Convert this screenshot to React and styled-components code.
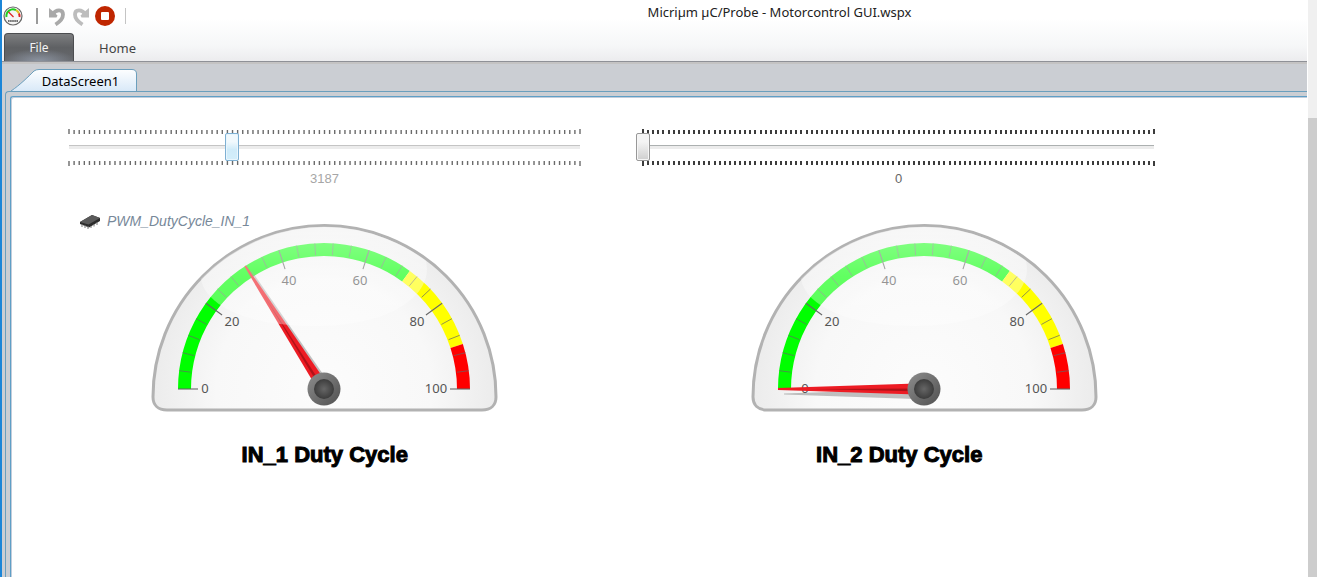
import React, { useState } from "react";
import styled, { createGlobalStyle, css } from "styled-components";

const Global = createGlobalStyle`
  *, *::before, *::after { box-sizing: border-box; }
  body { margin: 0; background: #fff; font-family: "Noto Sans", "Open Sans", sans-serif; }
`;

const Screen = styled.div`
  display: flex;
  min-height: 100vh;
`;

const Window = styled.div`
  flex: 1;
  min-width: 0;
  display: flex;
  flex-direction: column;
  border-left: 2px solid #1c86d8;
  background: #cbced3;
`;

const Scrollbar = styled.div`
  width: 10px;
  padding-top: 118px;
  background: #f0f0f0;
  border-left: 1px solid #fff;
  display: flex;
`;

const ScrollThumb = styled.div`
  flex: 1;
  background: #cdcdcd;
`;

const Ribbon = styled.header`
  background: linear-gradient(#fff 30%, #f6f7f8 75%, #ececee);
  border-bottom: 1px solid #8f9197;
`;

const TitleBar = styled.div`
  display: flex;
  height: 33px;
`;

const QuickAccess = styled.div`
  display: flex;
  align-items: center;
  width: 250px;
  padding: 0 0 2px 1px;
`;

const AppMark = styled.span`
  display: flex;
  width: 20px;
  margin-right: 13px;
`;

const Separator = styled.span`
  width: ${(p) => (p.$strong ? 2 : 1)}px;
  height: 16px;
  margin: 0 7px;
  margin-left: ${(p) => (p.$strong ? 0 : 8)}px;
  background: ${(p) => (p.$strong ? "#9a9a9a" : "#c4c4c4")};
`;

const ToolButton = styled.button`
  display: flex;
  justify-content: center;
  align-items: center;
  width: 24px;
  height: 24px;
  padding: 0;
  border: 0;
  background: none;
`;

const WindowTitle = styled.h1`
  flex: 1;
  margin: 0;
  padding-top: 2px;
  text-align: center;
  font: 400 13px/20px "Noto Sans", sans-serif;
  color: #222;
  white-space: nowrap;
`;

const RibbonTabs = styled.nav`
  display: flex;
  padding-left: 2px;
  height: 28px;
`;

const RibbonTab = styled.button`
  padding: 2px 0 0;
  border: 0;
  background: none;
  font: 400 13px/26px "Noto Sans", sans-serif;
  color: #444;
  width: 87px;
  ${(p) =>
    p.$file &&
    css`
      width: 70px;
      padding: 0;
      font-size: 12px;
      color: #f4f4f4;
      border: 1px solid #4c4d50;
      border-bottom: 0;
      border-radius: 4px 4px 0 0;
      background: radial-gradient(ellipse 36px 12px at 50% 100%, #8b93a0, transparent),
        linear-gradient(#7d7e80, #5f6164 50%, #66686c);
    `}
`;

const Workspace = styled.main`
  flex: 1;
  display: flex;
  flex-direction: column;
  border-top: 2px solid #c4c3c3;
  padding-top: 5px;
`;

const DocTabs = styled.div`
  display: flex;
  padding-left: 8px;
  height: 22px;
`;

const DocTab = styled.button`
  position: relative;
  width: 127px;
  padding: 2px 0 0 14px;
  border: 0;
  background: none;
  font: 400 13px/20px "Noto Sans", sans-serif;
  color: #000;
`;

const DocTabShape = styled.svg`
  position: absolute;
  inset: 0;
`;

const DocTabText = styled.span`
  position: relative;
`;

const Frame = styled.div`
  flex: 1;
  display: flex;
  margin-left: 3px;
  padding: 4px 0 0 4px;
  border: 1px solid #6b9fbd;
  border-width: 1px 0 0 1px;
  border-radius: 4px 0 0 0;
`;

const Panel = styled.section`
  flex: 1;
  min-width: 0;
  background: #fff;
  border: 1px solid #5f9fc6;
  border-width: 1px 0 0 1px;
  border-radius: 3px 0 0 0;
  box-shadow: inset 1px 1px 0 #c3cddb;
  padding-top: 31px;
`;

const SliderRow = styled.div`
  display: grid;
  grid-template-columns: 1fr 1fr;
  gap: 63px;
  padding: 0 153px 0 58px;
`;

const SliderBox = styled.label`
  display: flex;
  flex-direction: column;
  min-width: 0;
`;

const Ticks = styled.svg`
  display: block;
  width: 100%;
  height: 6px;
`;

const Range = styled.input`
  appearance: none;
  display: block;
  width: calc(100% + 14px);
  height: 28px;
  margin: -1px -7px;
  background: linear-gradient(${(p) => (p.$soft ? "#c4c4c4" : "#acb0b0")}, ${(p) =>
  p.$soft ? "#c4c4c4" : "#acb0b0"}) 7px 12px / calc(100% - 14px) 1px no-repeat,
    linear-gradient(#ececec, #ececec) 7px 13px / calc(100% - 14px) 3px no-repeat;
  &::-webkit-slider-thumb {
    appearance: none;
    width: 14px;
    height: 28px;
    border: 1px solid ${(p) => (p.$soft ? "#7eb0d3" : "#989898")};
    border-radius: 2px;
    box-shadow: inset 0 0 0 1px ${(p) => (p.$soft ? "#e9f6fd" : "#f6f6f6")};
    background: ${(p) =>
      p.$soft
        ? "linear-gradient(#f1f9fd 30%, #cfebf9 60%, #d3eefb)"
        : "linear-gradient(#f4f4f4 30%, #cfcfcf)"};
  }
`;

const Value = styled.output`
  padding-top: 4px;
  text-align: center;
  font: 400 13px/18px "Liberation Sans", Arial, sans-serif;
  color: ${(p) => (p.$soft ? "#a6a6a6" : "#666")};
`;

const GaugeRow = styled.div`
  position: relative;
  display: flex;
  gap: 252px;
  padding: 35px 0 0 139px;
`;

const Signal = styled.div`
  position: absolute;
  left: 69px;
  top: 24px;
  display: flex;
  align-items: center;
  gap: 6px;
  font: italic 400 14px/18px "Liberation Sans", Arial, sans-serif;
  color: #778899;
`;

const Dial = styled.svg`
  display: block;
  flex: none;
`;

const DialText = styled.text`
  font: 400 13px "Noto Sans", sans-serif;
  fill: #555;
`;

const CaptionRow = styled.div`
  display: grid;
  grid-template-columns: 1fr 1fr;
  gap: 63px;
  padding: 28px 152px 0 58px;
`;

const Caption = styled.h2`
  margin: 0;
  text-align: center;
  font: 700 22px/28px "Liberation Sans", Arial, sans-serif;
  -webkit-text-stroke: 1px #000;
  color: #000;
`;

const CX = 174;
const CY = 166;

function at(value, r) {
  const a = Math.PI * (1 - value / 100);
  return [CX + r * Math.cos(a), CY - r * Math.sin(a)];
}

function band(from, to) {
  const [x1, y1] = at(from, 146);
  const [x2, y2] = at(to, 146);
  const [x3, y3] = at(to, 133);
  const [x4, y4] = at(from, 133);
  return `M${x1} ${y1}A146 146 0 0 1 ${x2} ${y2}L${x3} ${y3}A133 133 0 0 0 ${x4} ${y4}Z`;
}

const BODY = "M3 174A171.500 171.500 0 0 1 346 174C346 182 341 187 332 187H17C8 187 3 182 3 174Z";

const LABELS = [
  [0, 55, 170],
  [20, 82, 103],
  [40, 139, 62],
  [60, 210, 62],
  [80, 267, 103],
  [100, 286, 170],
];

function Gauge({ id, value, label }) {
  const minor = Array.from({ length: 26 }, (_, i) => i * 4);
  const turn = `rotate(${value * 1.8} ${CX} ${CY})`;
  return (
    <Dial width="348" height="190" viewBox="0 0 348 190" role="img" aria-label={label}>
      <defs>
        <radialGradient id={`${id}-body`} gradientUnits="userSpaceOnUse" cx="174" cy="166" r="180">
          <stop offset="0" stopColor="#fcfcfc" />
          <stop offset=".6" stopColor="#f8f8f8" />
          <stop offset="1" stopColor="#eaeaea" />
        </radialGradient>
        <linearGradient id={`${id}-gloss`} x1="0" y1="0" x2="0" y2="1">
          <stop offset="0" stopColor="#fff" stopOpacity=".56" />
          <stop offset=".5" stopColor="#fff" stopOpacity=".38" />
          <stop offset="1" stopColor="#fff" stopOpacity=".34" />
        </linearGradient>
        <linearGradient id={`${id}-hub`} x1="0" y1="0" x2="1" y2="1">
          <stop offset="0" stopColor="#8e8e8e" />
          <stop offset="1" stopColor="#505050" />
        </linearGradient>
        <radialGradient id={`${id}-cap`}>
          <stop offset="0" stopColor="#666" />
          <stop offset="1" stopColor="#3c3c3c" />
        </radialGradient>
      </defs>
      <path d={BODY} fill={`url(#${id}-body)`} stroke="#b2b2b2" strokeWidth="3" />
      <path d={band(0, 70)} fill="#0f0" />
      <path d={band(70, 90)} fill="#ff0" />
      <path d={band(90, 100)} fill="#f00" />
      {minor.map((v) => {
        const major = v % 20 === 0;
        const [x1, y1] = at(v, 146);
        const [x2, y2] = at(v, major ? 126 : 134);
        return (
          <line key={v} x1={x1} y1={y1} x2={x2} y2={y2} stroke="#666" strokeWidth={major ? 1.1 : 0.7} />
        );
      })}
      {LABELS.map(([n, x, y]) => (
        <DialText key={n} x={x} y={y} textAnchor="middle">
          {n}
        </DialText>
      ))}
      <g transform="translate(6 5)">
        <path d="M28 165.500L174 160.500V171.500L28 166.500Z" fill="#777" fillOpacity=".45" transform={turn} />
      </g>
      <g transform={turn}>
        <path d="M28 165L174 160.300V171.700L28 167Z" fill="#ed1c24" />
        <path d="M60 166L174 165.500V168.500Z" fill="#b01218" />
      </g>
      <circle cx={CX} cy={CY} r="16.500" fill={`url(#${id}-hub)`} />
      <circle cx={CX} cy={CY} r="10" fill={`url(#${id}-cap)`} />
      <path d="M51 56A170 170 0 0 1 276 38C284 72 240 103 165 103C100 103 56 84 51 56Z" fill={`url(#${id}-gloss)`} />
    </Dial>
  );
}

function Slider({ label, initial, soft }) {
  const [value, setValue] = useState(initial);
  const marks = Array.from({ length: 101 }, (_, i) => i);
  const scale = (flip) => (
    <Ticks aria-hidden="true" overflow="visible">
      {marks.map((i) => {
        const end = i === 0 || i === 100;
        return (
          <line
            key={i}
            x1={`${i}%`}
            x2={`${i}%`}
            y1={flip || end ? 1 : 2}
            y2={flip && end ? 6 : flip ? 5 : 6}
            stroke={soft ? "#6a6a6a" : "#3c3c3c"}
            strokeWidth={soft ? 1.4 : 2}
            shapeRendering={soft ? undefined : "crispEdges"}
          />
        );
      })}
    </Ticks>
  );
  return (
    <SliderBox>
      {scale(false)}
      <Range
        type="range"
        min="0"
        max="10000"
        aria-label={label}
        value={value}
        $soft={soft}
        onChange={(e) => setValue(Number(e.target.value))}
      />
      {scale(true)}
      <Value $soft={soft}>{value}</Value>
    </SliderBox>
  );
}

const AppIcon = () => (
  <svg width="20" height="20" viewBox="0 0 20 20" fill="none">
    <circle cx="10" cy="10" r="9" fill="#f5f5f5" stroke="#666" strokeWidth="1.200" />
    <path d="M3.500 11A6.500 6.500 0 0 1 13 4.200" stroke="#1fd01f" strokeWidth="2" />
    <path d="M13 4.200A6.500 6.500 0 0 1 16 7.500" stroke="#e0c020" strokeWidth="2" />
    <path d="M16 7.500A6.500 6.500 0 0 1 16.500 11" stroke="#e02020" strokeWidth="2" />
    <path d="M5.500 6L10.500 11" stroke="#d22" strokeWidth="1.200" />
    <path d="M5 15H15" stroke="#444" strokeWidth="1.600" strokeDasharray="1.600 .5" />
  </svg>
);

const UndoIcon = ({ flip }) => (
  <svg width="18" height="20" viewBox="0 0 18 20" fill="none">
    <g transform={flip ? "translate(18 0) scale(-1 1)" : undefined}>
      <path d="M5 8C8 3 15 3 15 8.500C15 13 11.500 16 7.500 18.500" stroke={flip ? "#bdbdbd" : "#a9a9a9"} strokeWidth="3.800" />
      <path d="M1 2L4 4.500L9.500 9.500L8.500 11.500H1Z" fill={flip ? "#bdbdbd" : "#a9a9a9"} />
    </g>
  </svg>
);

const StopIcon = () => (
  <svg width="20" height="20" viewBox="0 0 20 20">
    <circle cx="10" cy="10" r="10" fill="#bf2600" />
    <rect x="6" y="6" width="8" height="8" rx="1" fill="#fff" />
  </svg>
);

const ChipIcon = () => (
  <svg width="21" height="15" viewBox="0 0 21 15">
    <path d="M0 8L12 1L20 4V7L9 13.500L0 10Z" fill="#2c2c2c" />
    <path d="M0 8L12 1L20 4L8.500 10.500Z" fill="#5a5a5a" />
    <path d="M2 10V13M5 11V14M8 12V15M11 12V14M14 10V12.500M17 8V11" stroke="#777" />
  </svg>
);

export default function App() {
  return (
    <Screen>
      <Global />
      <Window>
        <Ribbon>
          <TitleBar>
            <QuickAccess>
              <AppMark><AppIcon /></AppMark>
              <Separator $strong />
              <ToolButton aria-label="Undo"><UndoIcon /></ToolButton>
              <ToolButton aria-label="Redo"><UndoIcon flip /></ToolButton>
              <ToolButton aria-label="Stop"><StopIcon /></ToolButton>
              <Separator />
            </QuickAccess>
            <WindowTitle>Micriµm µC/Probe - Motorcontrol GUI.wspx</WindowTitle>
          </TitleBar>
          <RibbonTabs>
            <RibbonTab $file>File</RibbonTab>
            <RibbonTab>Home</RibbonTab>
          </RibbonTabs>
        </Ribbon>
        <Workspace>
          <DocTabs>
            <DocTab>
              <DocTabShape width="127" height="22" viewBox="0 0 127 22" aria-hidden="true">
                <defs>
                  <linearGradient id="tab-fill" x1="0" y1="0" x2="0" y2="1">
                    <stop offset="0" stopColor="#fdfeff" />
                    <stop offset="1" stopColor="#d9e9f8" />
                  </linearGradient>
                </defs>
                <path d="M1 22C10 16 19 7 24 2Q26 .5 29 .5H122Q126.500 .5 126.500 5V22" fill="url(#tab-fill)" stroke="#6b9fbd" />
              </DocTabShape>
              <DocTabText>DataScreen1</DocTabText>
            </DocTab>
          </DocTabs>
          <Frame>
            <Panel>
              <SliderRow>
                <Slider label="Input 1 duty cycle" initial={3187} soft />
                <Slider label="Input 2 duty cycle" initial={0} />
              </SliderRow>
              <GaugeRow>
                <Gauge id="g1" value={31.87} label="IN_1 gauge" />
                <Gauge id="g2" value={0} label="IN_2 gauge" />
                <Signal><ChipIcon />PWM_DutyCycle_IN_1</Signal>
              </GaugeRow>
              <CaptionRow>
                <Caption>IN_1 Duty Cycle</Caption>
                <Caption>IN_2 Duty Cycle</Caption>
              </CaptionRow>
            </Panel>
          </Frame>
        </Workspace>
      </Window>
      <Scrollbar><ScrollThumb /></Scrollbar>
    </Screen>
  );
}
